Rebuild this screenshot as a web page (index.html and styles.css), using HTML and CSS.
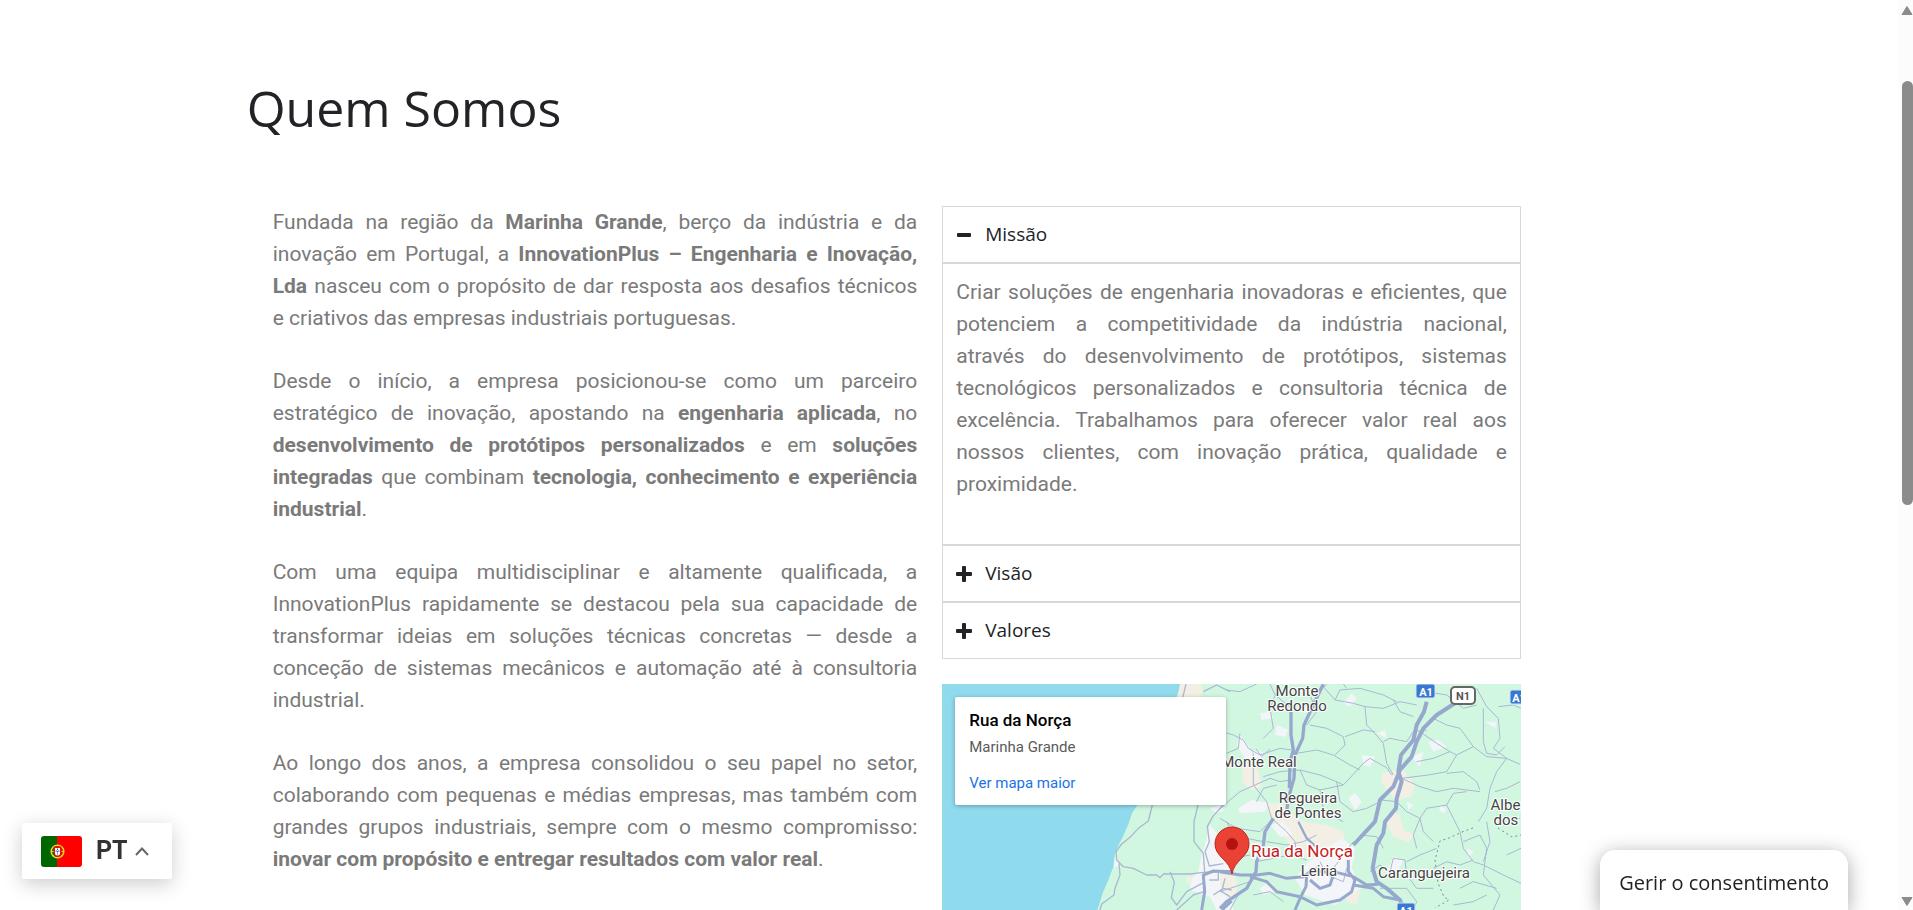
FILE: index.html
```html
<!DOCTYPE html>
<html lang="pt">
<head>
<meta charset="utf-8">
<title>Quem Somos</title>
<link rel="stylesheet" href="styles.css">
</head>
<body>
<main class="page">
  <h1 class="title">Quem Somos</h1>
  <div class="columns">
    <section class="story">
      <p>Fundada na região da <strong>Marinha Grande</strong>, berço da indústria e da inovação em Portugal, a <strong>InnovationPlus – Engenharia e Inovação, Lda</strong> nasceu com o propósito de dar resposta aos desafios técnicos e&nbsp;criativos das empresas industriais portuguesas.</p>
      <p>Desde o início, a empresa posicionou-se como um parceiro estratégico de inovação, apostando na <strong>engenharia aplicada</strong>, no <strong>desenvolvimento de protótipos personalizados</strong> e em <strong>soluções integradas</strong> que combinam <strong>tecnologia, conhecimento e experiência industrial</strong>.</p>
      <p>Com uma equipa multidisciplinar e altamente qualificada, a InnovationPlus rapidamente se destacou pela sua capacidade de transformar ideias em soluções técnicas concretas — desde a conceção de sistemas mecânicos e automação até à consultoria industrial.</p>
      <p>Ao longo dos anos, a empresa consolidou o seu papel no setor, colaborando com pequenas e médias empresas, mas também com grandes grupos industriais, sempre com o mesmo compromisso: <strong>inovar com propósito e entregar resultados com valor real</strong>.</p>
    </section>
    <div class="side">
      <div class="accordion">
        <button class="accordion-head" type="button" aria-expanded="true" aria-controls="missao">
          <svg class="sign" viewBox="0 0 16 16" aria-hidden="true"><rect x="1" y="6" width="14" height="4" rx="1"/></svg>
          Missão
        </button>
        <div class="accordion-body" id="missao">
          <p>Criar soluções de engenharia inovadoras e eficientes, que potenciem a competitividade da indústria nacional, através&nbsp;do desenvolvimento de protótipos, sistemas tecnológicos personalizados e consultoria técnica de excelência. Trabalhamos para oferecer valor real aos nossos clientes, com inovação prática, qualidade e proximidade.</p>
        </div>
        <button class="accordion-head" type="button" aria-expanded="false">
          <svg class="sign" viewBox="0 0 16 16" aria-hidden="true"><path d="M6 1q0-1 1-1h2q1 0 1 1v5h5q1 0 1 1v2q0 1-1 1h-5v5q0 1-1 1H7q-1 0-1-1v-5H1q-1 0-1-1V7q0-1 1-1h5z"/></svg>
          Visão
        </button>
        <button class="accordion-head" type="button" aria-expanded="false">
          <svg class="sign" viewBox="0 0 16 16" aria-hidden="true"><path d="M6 1q0-1 1-1h2q1 0 1 1v5h5q1 0 1 1v2q0 1-1 1h-5v5q0 1-1 1H7q-1 0-1-1v-5H1q-1 0-1-1V7q0-1 1-1h5z"/></svg>
          Valores
        </button>
      </div>
      <div class="map">
        <svg class="map-canvas" viewBox="0 0 579 320" preserveAspectRatio="xMinYMin slice" role="img" aria-label="Mapa de Leiria e Marinha Grande">
          <rect width="579" height="320" fill="#d2f7e1"/>
          <g transform="translate(-12 -9) scale(.33333)">
            <path d="M0 0H760L742 60L700 180L660 300L622 390L606 415L596 445L580 482L566 510L554 540L550 575L535 615L518 655L502 705L440 1000H0z" fill="#90daee"/>
            <path d="M750 27H812L820 50L800 75H742z" fill="#f3efe4"/>
            <path d="M840 400l30-10 15 15-25 10zM840 450l25 30 25 50 10 60 10 115H860l-20-40-60-20 0-30 25-25 10-50 15-50zM556 545l18 24-22 8z" fill="#f4f5f8"/>
            <path d="M880 600l40 10v50l-30 10zM770 600l18 8-4 20-14-6z" fill="#f3efe4"/>
          </g>
          <g transform="translate(278 -9) scale(.33333)">
            <path d="M65 265l40 0 12 30 8 40-30 10-25-20zM485 295l60-15 40 50-10 35-50 10-40-50zM510 410l30 10 10 45 35 15-20 20-45-15-20-40zM130 380l60 10 60 50 70 10 50 20 10 60-110 20-60-40-60-90zM0 590l50 0-10 40-40 10zM370 640l50 10-10 40-30-10z" fill="#f3efe4"/>
            <path d="M60 180l25 30 20 45-30-5-25-40zM100 225l40 10-15 15-25-5zM55 400l40-25 50 10-10 25-75 5zM150 450l40-10 30 40-40 5zM265 560l100-70 40 30-10 60 30 60-80 50-90-30-30-50zM170 150l35 15-10 20-30-5zM385 370l20-15 20 25-20 25zM575 245l35-15-10 45zM625 200l30-5 25 20-40 15zM120 115l30-5 10 20-35 5zM370 85l25-30 15 15-20 25zM660 390l20 15-10 10-12-10zM795 140l35 0-5 20zM740 520l20 10-15 20zM500 590l20-45 30 10-30 60zM120 640l30-20 15 30-35 10zM470 175l25-10 5 25zM560 380l20 10-15 15zM60 510l30-10 5 30zM230 110l20-25 20 30zM425 240l40 5-15 30-20-5z" fill="#f4f5f8"/>
          </g>
          <!-- minor roads -->
          <g transform="translate(-12 -9) scale(.33333)" fill="none" stroke="#a9b8d2" stroke-width="4" stroke-linejoin="round">
            <path d="M768 27l-12 50M820 50l40-20 40 20M667 390L655 438L625 460L600 487L575 507L558 530L560 555L580 575L610 580L650 600L680 600L690 608L700 597L780 597L820 592L900 588M567 565L570 600L555 640L552 660L515 687L510 705M804 390L792 440V500L820 535L824 590M880 390L848 425L832 455L838 500L825 530L838 573L880 566M720 590L733 622L724 668L740 690L770 650L822 622M740 705L790 660L822 650M865 590V615H838M885 610L875 650L900 665M850 660L880 640L905 645"/>
          </g>
          <g transform="translate(278 -9) scale(.33333)" fill="none" stroke="#a9b8d2" stroke-width="3" stroke-linejoin="round">
            <path d="M0 168L40 180L70 195L85 220L120 240L180 220L215 225M60 175L55 220L20 235M100 235V330L140 380L155 430L200 470L225 500L230 545M108 222L125 245L150 222M130 305L180 290L240 285L300 300L350 320L370 330L430 265L450 250L500 278L515 300M230 235L290 225L340 240L390 270L420 285M270 150L320 160L370 185L375 210L345 240M375 185L430 165L465 170M310 35L345 75L400 85L435 95L440 150L460 170L490 205L500 265L520 300M435 95L490 100L540 80L590 90M345 75L360 45L420 40L490 60L530 80M490 200L510 190L560 200L580 170L620 165M580 125L540 110L520 75M600 170L650 205L690 230L710 240L680 290L625 300L545 310M710 240L760 215L800 245L860 250M545 310L600 335L650 350L700 340L780 350M680 295L730 290L770 320L780 345M770 40L800 95L835 130L840 190L820 220L860 250L900 268M835 95L880 90L903 100M790 100L790 200L800 235L830 240L855 215M860 250L830 290L810 340L800 400L775 440M900 320L860 340L825 350M485 375L530 380L560 410L600 430L620 400L680 390L700 430L720 470L730 520L760 560L790 570L850 600L903 625M730 500L780 480L800 520L790 600L840 660L820 705M600 430L580 480L590 520M680 390L700 355L740 350M0 400L60 350L150 310L180 320L210 315M0 430L50 460L120 470L150 440M140 500L200 510L250 500L290 480M110 560L160 550L210 540L260 555M0 505L80 490L130 500M110 380L130 340L170 330M240 285L260 330L300 345L310 400L350 430L370 440M350 320L360 380L400 410L440 400L480 380M300 345L370 330M260 150L290 110L270 60L320 30M150 27L165 60L215 100M110 27L60 50L20 45M0 650L30 640L90 620M30 705L60 650M100 660L150 650L190 680M300 560L320 600L370 620L380 580M340 580L370 540L400 500M270 590L300 570M450 590L480 570L510 590L520 550L555 555L560 600L590 640L640 640M480 640L560 640L590 680L580 705M640 580L680 560L720 570L760 555M640 500L610 470L600 430M650 520L600 540L560 560M850 450L900 430M800 440L810 500L790 560M860 540L903 520M420 480L470 485L490 520M720 640L760 620L830 640M700 690L760 680L800 660M90 540L40 550L0 540M20 440L40 480M170 50L150 100L160 160L130 190M590 260L640 250L690 230M380 40L370 27M620 50L680 60L730 100L770 90M640 130L680 150L720 160L760 215"/>
          </g>
          <!-- main roads -->
          <g fill="none" stroke="#97a8cd" stroke-linejoin="round">
            <g transform="translate(-12 -9) scale(.33333)" stroke-width="9">
              <path d="M815 705L824 650L820 600L850 588L905 590M876 705L905 678"/>
            </g>
            <g transform="translate(278 -9) scale(.33333)" stroke-width="9">
              <path stroke-width="10" d="M310 27L280 90L252 150L248 190L225 240L222 310L205 370L200 410M213 105V180L220 225L210 260L208 340M160 430L135 470L130 510L110 560L108 590L80 640L20 680L0 700"/>
              <path stroke-width="12" d="M620 80L612 110L590 150L580 195L543 240L535 290L545 320L530 370L528 400L495 440L490 475L470 510L458 580L470 620L500 640L540 675L552 705M720 75L650 120L610 160L590 200L575 245L540 285L520 335L480 375L465 440L400 510"/>
              <path stroke-width="7" d="M235 440L260 490L295 520"/>
              <path d="M0 590L60 600L110 600L150 595L200 610L250 605L270 590L340 590L400 605L440 630L475 628M90 605L140 620L170 650L240 665L290 690L360 675L395 650L405 615L385 590V555M260 600L258 635L240 670L225 705M400 630L460 640L490 665L540 675M270 615L300 640L330 630L340 600"/>
            </g>
          </g>
          <path d="M531 144L520 148L507 154L498 157L493 176L496 199L502 213L507 216L493 224M556 144L570 153L579 151" fill="none" stroke="#7e8b86" stroke-dasharray="2 3"/>
          <g class="map-label">
            <text x="355" y="12">Monte</text><text x="355" y="27">Redondo</text>
            <text x="317" y="83">Monte Real</text>
            <text x="366" y="119">Regueira</text><text x="366" y="134">de Pontes</text>
            <text x="377" y="192">Leiria</text>
            <text x="482" y="194">Caranguejeira</text>
            <text x="566" y="126">Alber</text><text x="564" y="141">dos</text>
          </g>
          <text class="map-place" x="309" y="173">Rua da Norça</text>
          <g class="road-badge">
            <rect x="474" y="0" width="19" height="14" rx="2"/><text x="484" y="12">A1</text>
            <rect x="568" y="6" width="19" height="14" rx="2"/><text x="577" y="18">A1</text>
            <rect x="455" y="219" width="18" height="14" rx="2"/><text x="464" y="231">A1</text>
          </g>
          <g class="road-badge road-badge-plain"><rect x="509" y="3" width="24" height="17" rx="4"/><text x="521" y="16">N1</text></g>
          <path d="M290 190C288 176 273 173 273 160a17 17 0 0 1 34 0C307 173 292 176 290 190z" fill="#ea4335" stroke="#c5221f"/>
          <circle cx="290" cy="160" r="6" fill="#b31412"/>
        </svg>
        <div class="map-card">
          <div class="map-card-title">Rua da Norça</div>
          <div class="map-card-area">Marinha Grande</div>
          <a class="map-card-link" href="#mapa">Ver mapa maior</a>
        </div>
      </div>
    </div>
  </div>
</main>

<button class="language" type="button">
  <svg class="flag" viewBox="0 0 41 31" aria-hidden="true">
    <clipPath id="flag-shape"><rect width="41" height="31" rx="3"/></clipPath>
    <g clip-path="url(#flag-shape)">
      <path d="M0 0h17v31H0z" fill="#060"/><path d="M16 0h25v31H16z" fill="red"/>
      <circle cx="16.500" cy="15.500" r="6.300" fill="none" stroke="#e8d820" stroke-width="1.600"/>
      <path d="M10 15.500h13M12 11l9 9M21 11l-9 9" stroke="#e8d820"/>
      <path d="M12.500 10.500h8v6a4 4 0 0 1-8 0z" fill="#e01010"/>
      <path d="M14 12h5v5a2.500 2.500 0 0 1-5 0z" fill="#fff"/>
      <path d="M16.500 12.500v6M14.500 15h4" stroke="#3048a0" stroke-dasharray="1.500 1"/>
    </g>
  </svg>
  <span>PT</span>
  <svg class="chevron" viewBox="0 0 14 9" aria-hidden="true"><path d="M1 8l6-6.500L13 8"/></svg>
</button>

<button class="consent" type="button">Gerir o consentimento</button>

<div class="scrollbar" aria-hidden="true">
  <svg class="scroll-arrow" viewBox="0 0 12 10"><path d="M6 1L11 9H1z"/></svg>
  <div class="scroll-thumb"></div>
  <svg class="scroll-arrow" viewBox="0 0 12 10"><path d="M6 9L11 1H1z"/></svg>
</div>
</body>
</html>
```
FILE: styles.css
```css
* { box-sizing: border-box; }

body {
  margin: 0;
  height: 100vh;
  overflow: hidden;
  background: #fff;
  color: #7a7a7a;
  font: 21px/32px Roboto, sans-serif;
}

button { font: inherit; color: inherit; border: 0; background: none; cursor: pointer; }

.page { margin: 0 20.5% 0 13%; padding-top: 75px; }

.title {
  margin: 0 0 0 -2px;
  color: #212326;
  font: 400 50px/66px "Open Sans", sans-serif;
}

.columns {
  display: grid;
  grid-template-columns: 669fr 579fr;
  gap: 25px;
  margin-top: 65px;
}

.story { padding-left: 24px; text-align: justify; }
.story p { margin: 0 0 31px; }

.accordion-head {
  display: flex;
  align-items: center;
  gap: 12px;
  width: 100%;
  padding: 12px 13px 12px 12px;
  border: 1px solid #d5d8dc;
  color: #212326;
  font: 400 19px/31px "Open Sans", sans-serif;
}

.sign { width: 18px; height: 16px; fill: #212326; }

.accordion-body {
  padding: 12px 13px;
  border: 1px solid #d5d8dc;
  text-align: justify;
}
.accordion-body p { margin: 0 0 32px; }

.map { position: relative; margin-top: 25px; overflow: hidden; }
.map-canvas { display: block; width: 100%; height: 320px; }

.map-label text {
  font: 15px Roboto, sans-serif;
  fill: #444;
  stroke: #fff;
  stroke-width: 2px;
  paint-order: stroke;
  text-anchor: middle;
}
.map-place {
  font: 17px Roboto, sans-serif;
  fill: #c5221f;
  stroke: #fff;
  stroke-width: 3px;
  paint-order: stroke;
}
.road-badge rect { fill: #3779d0; stroke: #d6e4f8; }
.road-badge text { font: 700 11px Roboto, sans-serif; fill: #fff; text-anchor: middle; }
.road-badge-plain rect { fill: #fff; stroke: #666; stroke-width: 2px; }
.road-badge-plain text { fill: #555; }

.map-card {
  position: absolute;
  left: 13px;
  top: 13px;
  width: 271px;
  padding: 13px 14px 12px;
  border-radius: 2px;
  background: #fff;
  box-shadow: 0 1px 4px rgba(0, 0, 0, .3);
  font-size: 15px;
  line-height: 20px;
}
.map-card-title { color: #000; font-size: 17px; font-weight: 500; }
.map-card-area { margin-top: 7px; color: #5b5b5b; }
.map-card-link { display: block; margin-top: 16px; color: #1a73e8; text-decoration: none; }

.language {
  position: fixed;
  left: 22px;
  bottom: 31px;
  display: flex;
  align-items: center;
  width: 150px;
  height: 56px;
  padding: 0 19px;
  border-radius: 2px;
  background: #fff;
  box-shadow: 0 5px 20px rgba(0, 0, 0, .2);
  color: #333;
  font-size: 25px;
  font-weight: 700;
}
.flag { width: 41px; height: 31px; margin-right: 14px; }
.chevron { width: 14px; height: 9px; margin-left: 7px; fill: none; stroke: #666; stroke-width: 2; }

.consent {
  position: fixed;
  right: 65px;
  bottom: 0;
  padding: 17px 19px 11px;
  border-radius: 15px 15px 0 0;
  background: #fff;
  box-shadow: 0 4px 20px rgba(0, 0, 0, .35);
  color: #222;
  font: 400 20px/32px "Open Sans", sans-serif;
}

.scrollbar {
  position: fixed;
  inset: 0 0 0 auto;
  display: flex;
  flex-direction: column;
  justify-content: space-between;
  width: 15px;
  padding: 5px 0 3px 3px;
  background: #fcfcfc;
}
.scroll-arrow { width: 12px; height: 11px; fill: #8b8b8b; stroke: #8b8b8b; stroke-linejoin: round; }
.scroll-thumb { width: 11px; height: 47%; margin: 65px 0 auto 1px; border-radius: 6px; background: #8b8b8b; }
```
